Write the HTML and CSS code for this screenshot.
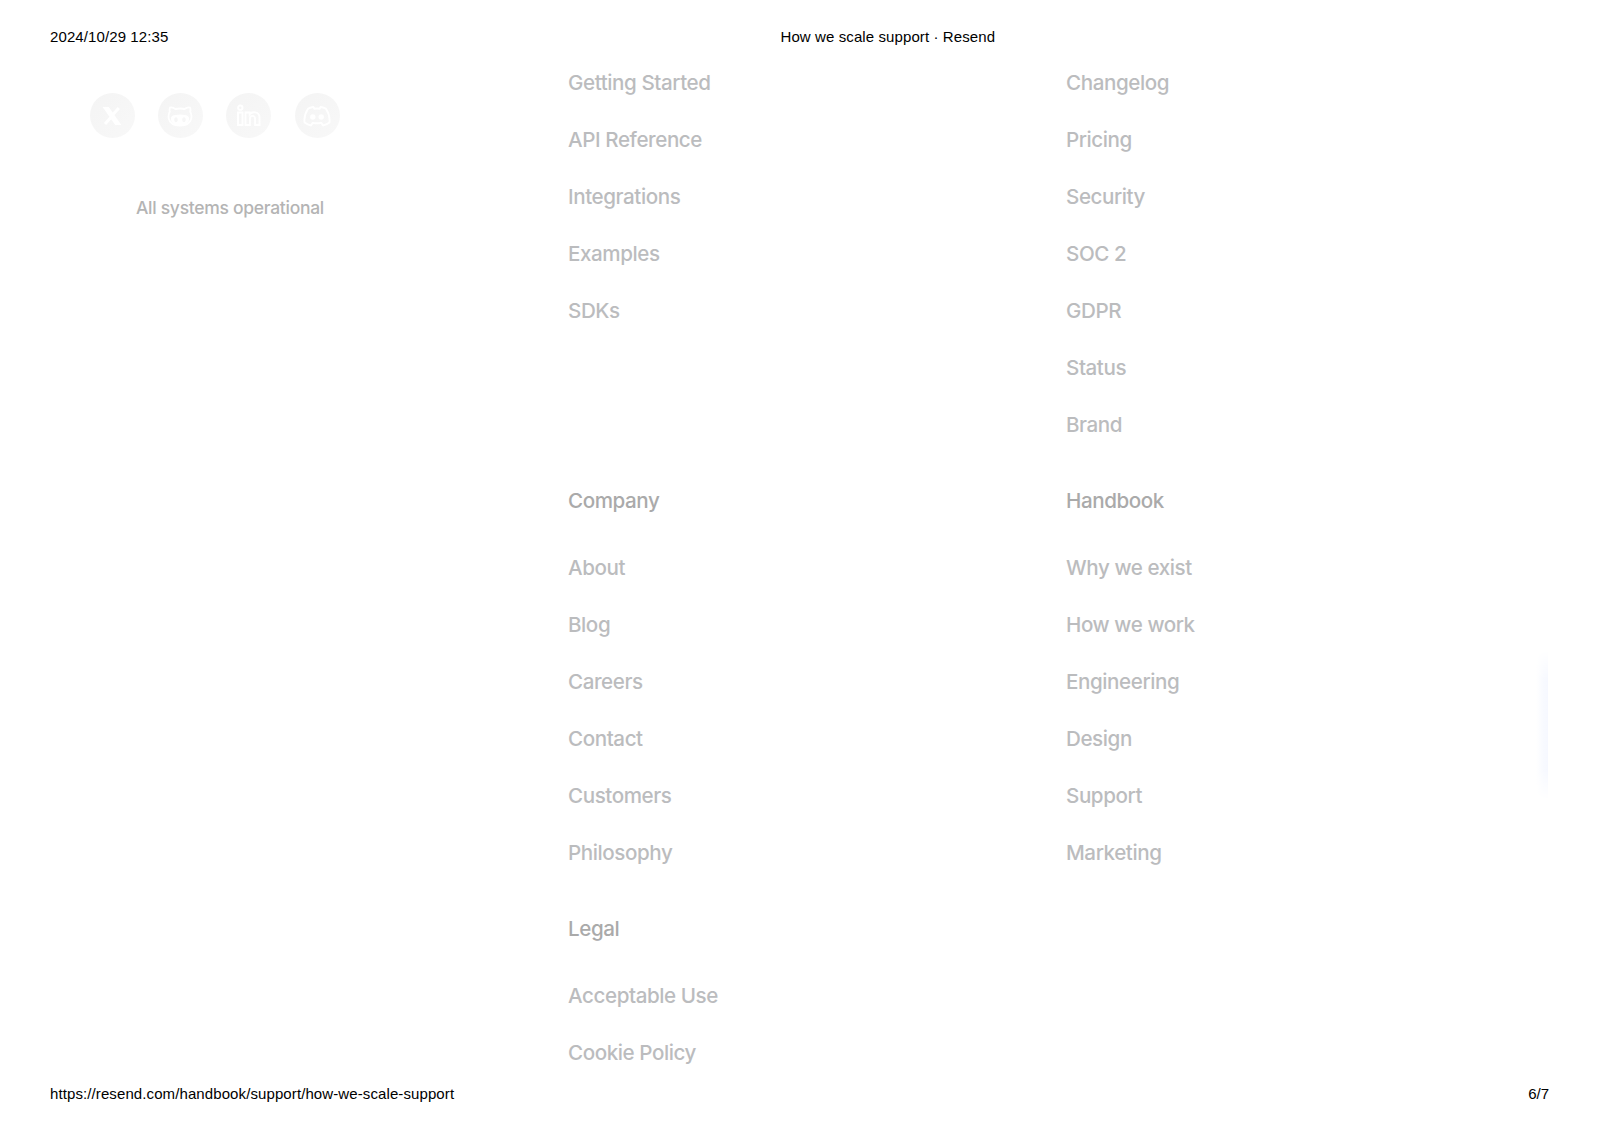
FILE: index.html
```html
<!DOCTYPE html>
<html lang="en">
<head>
<meta charset="utf-8">
<title>How we scale support · Resend</title>
<link rel="stylesheet" href="styles.css">
</head>
<body>
<div class="page">
  <header class="page-header">
    <span class="date">2024/10/29 12:35</span>
    <span class="title">How we scale support · Resend</span>
  </header>
  <main class="content">
    <section class="brand">
      <div class="socials">
        <a class="social" aria-label="X"><svg viewBox="0 0 24 24" width="24" height="24"><path d="M5.500 4.500h2.500l10.500 15H16zM18.800 4 13 10.500M10.800 13.500 5 20" fill="none" stroke="currentColor" stroke-width="3"/></svg></a>
        <a class="social" aria-label="GitHub"><svg viewBox="0 0 26 24" width="26" height="24"><path d="M3 3.500c2-.6 4 .4 5.500 1.500 3-.7 6-.7 9 0C19 3.900 21 2.900 23 3.500c.6 1.500.6 3 .2 4.300 1.300 1.800 1.600 4.200 1 7C23 20 19 21.500 13 21.500S3 20 1.800 14.800c-.6-2.800-.3-5.200 1-7C2.400 6.500 2.400 5 3 3.500z" fill="none" stroke="currentColor" stroke-width="1.800"/><path fill-rule="evenodd" d="M8 11c3-.8 7-.8 10 0 3 .2 4.500 2 4 4.500C21.500 19.500 18 21 13 21s-8.500-1.500-9-5.500C3.500 13 5 11.200 8 11zm1 2.200c-2.300 0-2.300 5 0 5s2.300-5 0-5zm8 0c-2.300 0-2.300 5 0 5s2.300-5 0-5z" fill="currentColor"/></svg></a>
        <a class="social" aria-label="LinkedIn"><svg viewBox="0 0 26 24" width="26" height="24"><path d="M2 8.500h4.500V21H2zM9.500 8.500h4.200v1.800c2.200-3 9.800-3.100 9.800 3.200V21h-4.400v-6.200c0-4-5.200-3.800-5.200 0V21H9.500z" fill="none" stroke="currentColor" stroke-width="1.900"/><circle cx="4.300" cy="3.700" r="2.200" fill="none" stroke="currentColor" stroke-width="1.900"/></svg></a>
        <a class="social" aria-label="Discord"><svg viewBox="0 0 28 24" width="28" height="24"><path d="M10.500 3C8.500 3.200 7 3.800 5 4.700 2.200 9 1 13.500 1.500 18.500 3.500 20 5.500 21 8 21.500l1.700-2.700c2.900.7 5.700.7 8.600 0L20 21.500c2.500-.5 4.500-1.500 6.500-3C27 13.500 25.800 9 23 4.700 21 3.800 19.500 3.200 17.500 3l-.9 1.800c-1.700-.3-3.500-.3-5.200 0z" fill="none" stroke="currentColor" stroke-width="1.900" stroke-linejoin="round"/><circle cx="9.800" cy="13" r="2.700" fill="currentColor"/><circle cx="18.200" cy="13" r="2.700" fill="currentColor"/></svg></a>
      </div>
      <a class="status">All systems operational</a>
    </section>
    <nav class="links">
      <div class="group">
        <ul><li>Getting Started</li><li>API Reference</li><li>Integrations</li><li>Examples</li><li>SDKs</li></ul>
      </div>
      <div class="group">
        <ul><li>Changelog</li><li>Pricing</li><li>Security</li><li>SOC 2</li><li>GDPR</li><li>Status</li><li>Brand</li></ul>
      </div>
      <div class="group">
        <h3>Company</h3>
        <ul><li>About</li><li>Blog</li><li>Careers</li><li>Contact</li><li>Customers</li><li>Philosophy</li></ul>
      </div>
      <div class="group">
        <h3>Handbook</h3>
        <ul><li>Why we exist</li><li>How we work</li><li>Engineering</li><li>Design</li><li>Support</li><li>Marketing</li></ul>
      </div>
      <div class="group">
        <h3>Legal</h3>
        <ul><li>Acceptable Use</li><li>Cookie Policy</li></ul>
      </div>
    </nav>
    <div class="glow"></div>
  </main>
  <footer class="page-footer">
    <span class="url">https://resend.com/handbook/support/how-we-scale-support</span>
    <span>6/7</span>
  </footer>
</div>
</body>
</html>
```
FILE: styles.css
```css
* { box-sizing: border-box; }
body { margin: 0; background: #fff; }
.page {
  width: 1600px;
  height: 1131px;
  padding: 28px 51px 28px 50px;
  display: flex;
  flex-direction: column;
  overflow: hidden;
}
.page-header, .page-footer {
  flex: none;
  height: 18px;
  display: flex;
  font: 15px/18px "Liberation Sans", Arial, sans-serif;
  color: #000;
  white-space: nowrap;
}
.page-header { display: grid; grid-template-columns: 730.5px 1fr; }
.page-footer { justify-content: space-between; }
.date { letter-spacing: 0.1px; }
.title { letter-spacing: 0.1px; }
.url { letter-spacing: 0.1px; }
.content {
  position: relative;
  flex: 1;
  min-height: 0;
  display: grid;
  grid-template-columns: 518px 1fr;
  padding-top: 22px;
  font-family: Inter, sans-serif;
}
.brand { padding: 25px 0 0 39.5px; }
.socials { display: flex; gap: 23.4px; }
.social {
  width: 45px;
  height: 45px;
  border-radius: 50%;
  display: flex;
  align-items: center;
  justify-content: center;
  background: linear-gradient(135deg, #f4f4f4, #f8f8f8);
  color: #fff;
}
.status {
  display: block;
  margin: 58px 0 0 46.5px;
  font-size: 17.5px;
  line-height: 24px;
  font-weight: 500;
  letter-spacing: -0.29px;
  color: #b4b4b4;
}
.links {
  display: grid;
  grid-template-columns: 498px 1fr;
  align-content: start;
  row-gap: 48px;
  padding-top: 1px;
  font-size: 20.6px;
  line-height: 28px;
  letter-spacing: -0.42px;
  color: #bbbcbe;
}
.links ul {
  list-style: none;
  margin: 0;
  padding: 0;
  display: flex;
  flex-direction: column;
  gap: 29px;
}
.links h3 {
  margin: 0 0 39px;
  font-size: 20.6px;
  font-weight: 500;
  color: #aaa;
}
.links li { font-weight: 500; }
/* Soft light at the right edge, cut off by the print area */
.glow {
  position: absolute;
  right: 1.5px;
  top: 604px;
  width: 12px;
  height: 150px;
  background: linear-gradient(to right, #fff, #f8faff 60%, #f6f8ff);
  -webkit-mask-image: linear-gradient(transparent, #000 20%, #000 80%, transparent);
  mask-image: linear-gradient(transparent, #000 20%, #000 80%, transparent);
}
```
